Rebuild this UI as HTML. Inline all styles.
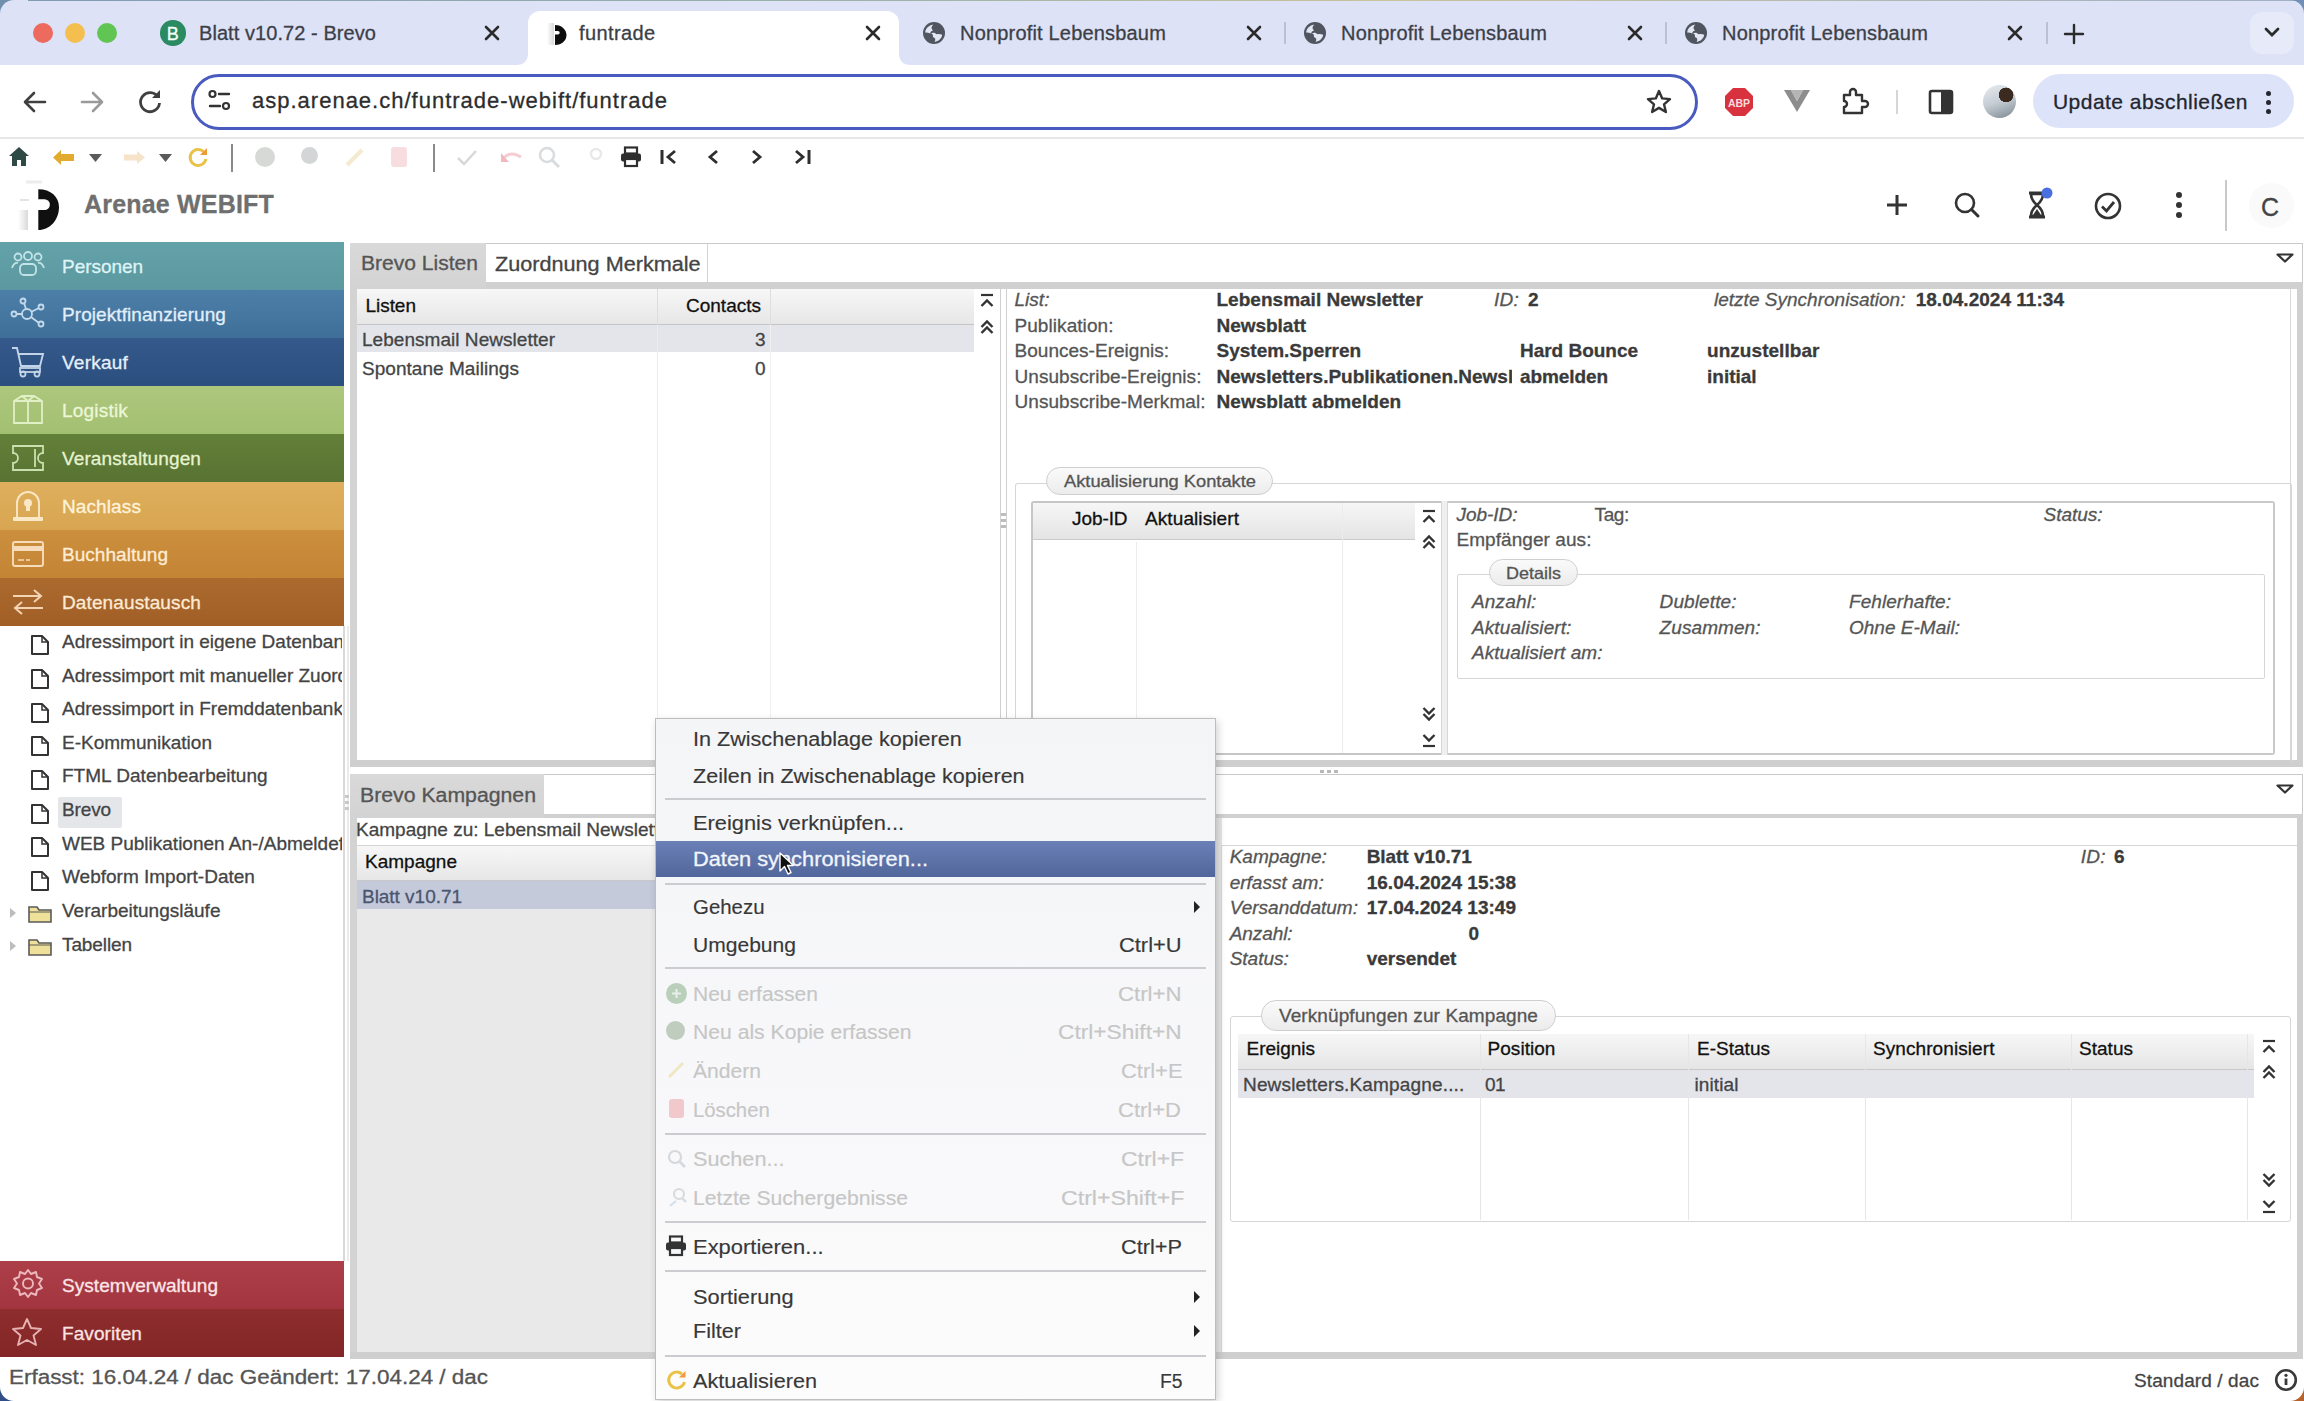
<!DOCTYPE html>
<html><head><meta charset="utf-8">
<style>
*{box-sizing:border-box;margin:0;padding:0}
html,body{width:2304px;height:1401px;overflow:hidden;background:#fff;font-family:"Liberation Sans",sans-serif}
body{position:relative}
.a{position:absolute}
.t{position:absolute;white-space:nowrap;line-height:1;-webkit-text-stroke:0.3px currentColor}
svg.a{overflow:visible}
</style></head>
<body>
<div class="a" style="left:0px;top:0px;width:2304px;height:65px;background:#dde2f7;"></div>
<div class="a" style="left:0px;top:0px;width:2304px;height:1px;background:linear-gradient(90deg,#7f9bb5,#9fb4a8 40%,#c9c39a 60%,#9fb0c8);"></div>
<div class="a" style="left:0;top:0;width:14px;height:14px;background:#6f8fae"></div><div class="a" style="left:0;top:0;width:28px;height:28px;border-top-left-radius:14px;background:#dde2f7"></div>
<div class="a" style="left:33px;top:23px;width:20px;height:20px;border-radius:50%;background:#ec6a5e"></div>
<div class="a" style="left:65px;top:23px;width:20px;height:20px;border-radius:50%;background:#f4bf4f"></div>
<div class="a" style="left:97px;top:23px;width:20px;height:20px;border-radius:50%;background:#61c554"></div>
<div class="a" style="left:160px;top:20px;width:25.5px;height:25.5px;border-radius:50%;background:#2a8a62"></div>
<span class="t" style="left:166.8px;top:25.26px;font-size:18px;color:#f4fff8">B</span>
<span class="t" style="left:199.0px;top:23.07px;font-size:20px;color:#3c3f47;letter-spacing:0.067px">Blatt v10.72 - Brevo</span>
<svg class="a" style="left:484px;top:25px;" width="16" height="16" viewBox="0 0 16 16"><path d="M2 2L14 14M14 2L2 14" stroke="#2b2b2b" stroke-width="2.6" stroke-linecap="round"/></svg>
<div class="a" style="left:528px;top:11px;width:371px;height:60px;background:#fff;border-radius:12px 12px 0 0"></div>
<svg class="a" style="left:516px;top:53px" width="12" height="12"><path d="M0 12 Q12 12 12 0 L12 12Z" fill="#fff"/></svg>
<svg class="a" style="left:899px;top:53px" width="12" height="12"><path d="M12 12 Q0 12 0 0 L0 12Z" fill="#fff"/></svg>
<svg class="a" style="left:546px;top:20px;" width="24" height="26" viewBox="0 0 24 26"><defs><linearGradient id="fg1" x1="0" x2="1"><stop offset="0" stop-color="#fff"/><stop offset="1" stop-color="#d8d8d8"/></linearGradient></defs><rect x="1" y="3" width="7" height="22" fill="url(#fg1)"/><path fill-rule="evenodd" d="M9 5 C16 5 20.5 10 20.5 15 C20.5 20.5 16 25 9 25 Z M9 11 H12 A1.7 1.7 0 0 1 12 14.4 H9 Z" fill="#0d0d0d"/></svg>
<span class="t" style="left:579.0px;top:23.07px;font-size:20px;color:#3c3f47;letter-spacing:0.389px">funtrade</span>
<svg class="a" style="left:865px;top:25px;" width="16" height="16" viewBox="0 0 16 16"><path d="M2 2L14 14M14 2L2 14" stroke="#2b2b2b" stroke-width="2.6" stroke-linecap="round"/></svg>
<svg class="a" style="left:922px;top:21px;" width="24" height="24" viewBox="0 0 24 24"><circle cx="12" cy="12" r="11" fill="#50555f"/><path d="M3.2 11.5 C3.6 7.5 6.5 4.6 11.3 3.6 C9.6 5.6 8.6 7.5 11 9.4 C9.2 10 8 10.8 8.4 12.4 C6.5 11.6 4.8 11.4 3.2 11.5Z" fill="#e3e6f3"/><path d="M9 12.3 C11.2 11.2 13.2 11.7 14.6 13.3 C16.4 12.8 18.3 13 20.2 13.8 C19.6 17.6 16.6 20.4 12.6 20.9 C14 18.8 13.4 16.8 10.8 16.1 C11.6 14.6 10.6 13 9 12.3Z" fill="#e3e6f3"/></svg>
<span class="t" style="left:960.0px;top:23.07px;font-size:20px;color:#3c3f47;letter-spacing:0.182px">Nonprofit Lebensbaum</span>
<svg class="a" style="left:1246px;top:25px;" width="16" height="16" viewBox="0 0 16 16"><path d="M2 2L14 14M14 2L2 14" stroke="#2b2b2b" stroke-width="2.6" stroke-linecap="round"/></svg>
<div class="a" style="left:1284px;top:22px;width:2px;height:22px;background:#b9c0d8;"></div>
<svg class="a" style="left:1303px;top:21px;" width="24" height="24" viewBox="0 0 24 24"><circle cx="12" cy="12" r="11" fill="#50555f"/><path d="M3.2 11.5 C3.6 7.5 6.5 4.6 11.3 3.6 C9.6 5.6 8.6 7.5 11 9.4 C9.2 10 8 10.8 8.4 12.4 C6.5 11.6 4.8 11.4 3.2 11.5Z" fill="#e3e6f3"/><path d="M9 12.3 C11.2 11.2 13.2 11.7 14.6 13.3 C16.4 12.8 18.3 13 20.2 13.8 C19.6 17.6 16.6 20.4 12.6 20.9 C14 18.8 13.4 16.8 10.8 16.1 C11.6 14.6 10.6 13 9 12.3Z" fill="#e3e6f3"/></svg>
<span class="t" style="left:1341.0px;top:23.07px;font-size:20px;color:#3c3f47;letter-spacing:0.182px">Nonprofit Lebensbaum</span>
<svg class="a" style="left:1627px;top:25px;" width="16" height="16" viewBox="0 0 16 16"><path d="M2 2L14 14M14 2L2 14" stroke="#2b2b2b" stroke-width="2.6" stroke-linecap="round"/></svg>
<div class="a" style="left:1665px;top:22px;width:2px;height:22px;background:#b9c0d8;"></div>
<svg class="a" style="left:1684px;top:21px;" width="24" height="24" viewBox="0 0 24 24"><circle cx="12" cy="12" r="11" fill="#50555f"/><path d="M3.2 11.5 C3.6 7.5 6.5 4.6 11.3 3.6 C9.6 5.6 8.6 7.5 11 9.4 C9.2 10 8 10.8 8.4 12.4 C6.5 11.6 4.8 11.4 3.2 11.5Z" fill="#e3e6f3"/><path d="M9 12.3 C11.2 11.2 13.2 11.7 14.6 13.3 C16.4 12.8 18.3 13 20.2 13.8 C19.6 17.6 16.6 20.4 12.6 20.9 C14 18.8 13.4 16.8 10.8 16.1 C11.6 14.6 10.6 13 9 12.3Z" fill="#e3e6f3"/></svg>
<span class="t" style="left:1722.0px;top:23.07px;font-size:20px;color:#3c3f47;letter-spacing:0.182px">Nonprofit Lebensbaum</span>
<svg class="a" style="left:2007px;top:25px;" width="16" height="16" viewBox="0 0 16 16"><path d="M2 2L14 14M14 2L2 14" stroke="#2b2b2b" stroke-width="2.6" stroke-linecap="round"/></svg>
<div class="a" style="left:2046px;top:22px;width:2px;height:22px;background:#b9c0d8;"></div>
<svg class="a" style="left:2063px;top:23px;" width="22" height="22" viewBox="0 0 22 22"><path d="M11 2V20M2 11H20" stroke="#2b2b2b" stroke-width="2.4" stroke-linecap="round"/></svg>
<div class="a" style="left:2250px;top:12px;width:44px;height:42px;border-radius:12px;background:#e6eaf9"></div>
<svg class="a" style="left:2290px;top:0" width="14" height="14"><path d="M14 0 L0 0 A14 14 0 0 1 14 14Z" fill="#6f8fb6"/></svg>
<svg class="a" style="left:2263px;top:26px;" width="18" height="12" viewBox="0 0 18 12"><path d="M3 3L9 9L15 3" stroke="#2b2b2b" stroke-width="2.8" fill="none" stroke-linecap="round"/></svg>
<div class="a" style="left:0px;top:65px;width:2304px;height:73px;background:#fff;"></div>
<div class="a" style="left:0px;top:137px;width:2304px;height:2px;background:#e6e6e6;"></div>
<svg class="a" style="left:22px;top:89px;" width="26" height="26" viewBox="0 0 26 26"><path d="M23 13H4M12 4L3 13L12 22" stroke="#3f3f3f" stroke-width="2.6" fill="none" stroke-linecap="round" stroke-linejoin="round"/></svg>
<svg class="a" style="left:79px;top:89px;" width="26" height="26" viewBox="0 0 26 26"><path d="M3 13H22M14 4L23 13L14 22" stroke="#9a9a9a" stroke-width="2.6" fill="none" stroke-linecap="round" stroke-linejoin="round"/></svg>
<svg class="a" style="left:137px;top:88px;" width="26" height="26" viewBox="0 0 26 26"><path d="M21 9 A9.5 9.5 0 1 0 22.5 15" stroke="#3f3f3f" stroke-width="2.8" fill="none"/><path d="M23 2V10H15Z" fill="#3f3f3f"/></svg>
<div class="a" style="left:191px;top:74px;width:1507px;height:56px;border:3px solid #4a5bbf;border-radius:28px;background:#fff"></div>
<svg class="a" style="left:207px;top:89px;" width="26" height="24" viewBox="0 0 26 24"><circle cx="5.5" cy="5" r="3" stroke="#333" stroke-width="2.2" fill="none"/><path d="M12 5H22M3 17H13" stroke="#333" stroke-width="2.4" stroke-linecap="round"/><circle cx="19" cy="17" r="3" stroke="#333" stroke-width="2.2" fill="none"/></svg>
<span class="t" style="left:252.0px;top:90.38px;font-size:22px;color:#2d2d2d;letter-spacing:1.002px">asp.arenae.ch/funtrade-webift/funtrade</span>
<svg class="a" style="left:1645px;top:88px;" width="28" height="28" viewBox="0 0 28 28"><path d="M14 3L17.2 10.4L25 11.1L19 16.3L20.9 24L14 19.9L7.1 24L9 16.3L3 11.1L10.8 10.4Z" stroke="#333" stroke-width="2.4" fill="none" stroke-linejoin="round"/></svg>
<svg class="a" style="left:1724px;top:87px;" width="30" height="30" viewBox="0 0 30 30"><path d="M9 1H21L29 9V21L21 29H9L1 21V9Z" fill="#d8323f"/><text x="15" y="19.5" font-family="Liberation Sans" font-weight="bold" font-size="10.5" fill="#fbdadd" text-anchor="middle">ABP</text></svg>
<svg class="a" style="left:1783px;top:88px;" width="28" height="26" viewBox="0 0 28 26"><path d="M1 2L14 24L27 2L20 2L14 13L8 2Z" fill="#8d8d8d"/><path d="M8 2L14 13L20 2" fill="#b5b5b5"/></svg>
<svg class="a" style="left:1840px;top:86px;" width="30" height="30" viewBox="0 0 30 30"><path d="M4 9H10V6A3 3 0 0 1 16 6V9H22V15H25A3 3 0 0 1 25 21H22V27H4V21A3 3 0 0 0 4 15Z" stroke="#333" stroke-width="2.4" fill="none" stroke-linejoin="round"/></svg>
<div class="a" style="left:1896px;top:90px;width:2px;height:24px;background:#d6d6d6;"></div>
<svg class="a" style="left:1928px;top:89px;" width="26" height="26" viewBox="0 0 26 26"><rect x="2" y="2" width="22" height="22" rx="2" stroke="#333" stroke-width="2.6" fill="none"/><rect x="13" y="2" width="11" height="22" fill="#333"/></svg>
<div class="a" style="left:1983px;top:85px;width:33px;height:33px;border-radius:50%;background:radial-gradient(circle at 70% 30%,#3a2a20 0 22%,transparent 23%),linear-gradient(160deg,#e8ecef 0%,#c5ccd3 50%,#7b8791 100%)"></div>
<div class="a" style="left:2033px;top:74px;width:261px;height:54px;border-radius:27px;background:#dde3f8"></div>
<span class="t" style="left:2053.0px;top:91.22px;font-size:21px;color:#23262e;letter-spacing:0.456px">Update abschließen</span>
<div class="a" style="left:2266px;top:91px;width:5px;height:5px;border-radius:50%;background:#23262e"></div>
<div class="a" style="left:2266px;top:100px;width:5px;height:5px;border-radius:50%;background:#23262e"></div>
<div class="a" style="left:2266px;top:109px;width:5px;height:5px;border-radius:50%;background:#23262e"></div>
<svg class="a" style="left:8px;top:146px;" width="22" height="21" viewBox="0 0 22 21"><path d="M11 1L1 10H4V20H9V14H13V20H18V10H21Z" fill="#2f4a44"/></svg>
<svg class="a" style="left:52px;top:149px;" width="24" height="17" viewBox="0 0 24 17"><path d="M1 8.5L9 1V5H22V12H9V16Z" fill="#e2ab2e"/></svg>
<svg class="a" style="left:89px;top:154px;" width="13" height="8" viewBox="0 0 13 8"><path d="M0 0H13L6.5 8Z" fill="#5a5a5a"/></svg>
<svg class="a" style="left:122px;top:150px;" width="24" height="15" viewBox="0 0 24 15"><path d="M23 7.5L15 1V4.5H2V10.5H15V14Z" fill="#f6e3c9"/></svg>
<svg class="a" style="left:159px;top:154px;" width="13" height="8" viewBox="0 0 13 8"><path d="M0 0H13L6.5 8Z" fill="#5a5a5a"/></svg>
<svg class="a" style="left:187px;top:146px;" width="22" height="22" viewBox="0 0 22 22"><path d="M17 6 A8 8 0 1 0 19 13" stroke="#e9c24a" stroke-width="3" fill="none"/><path d="M20 2V9H13Z" fill="#ef9b3a"/></svg>
<div class="a" style="left:231px;top:144px;width:2px;height:28px;background:#8a8a8a;"></div>
<div class="a" style="left:255px;top:147px;width:20px;height:20px;border-radius:50%;background:#d6d9d6"></div>
<div class="a" style="left:301px;top:147px;width:17px;height:17px;border-radius:50%;background:#d2d6d6"></div>
<svg class="a" style="left:344px;top:146px;" width="22" height="22" viewBox="0 0 22 22"><path d="M3 19L18 4" stroke="#f3ead0" stroke-width="4"/></svg>
<div class="a" style="left:391px;top:147px;width:16px;height:20px;border-radius:3px;background:#f8dde0"></div>
<div class="a" style="left:433px;top:144px;width:2px;height:28px;background:#8a8a8a;"></div>
<svg class="a" style="left:456px;top:148px;" width="22" height="18" viewBox="0 0 22 18"><path d="M2 10L8 16L20 3" stroke="#d8d8d8" stroke-width="2.5" fill="none"/></svg>
<svg class="a" style="left:500px;top:149px;" width="24" height="16" viewBox="0 0 24 16"><path d="M3 10 Q10 1 21 8" stroke="#f6cdd2" stroke-width="3" fill="none"/><path d="M1 4V13H9Z" fill="#f1b8c0"/></svg>
<svg class="a" style="left:538px;top:146px;" width="24" height="24" viewBox="0 0 24 24"><circle cx="9" cy="9" r="7" stroke="#d9dcdf" stroke-width="2.5" fill="none"/><path d="M14 14L21 21" stroke="#d9dcdf" stroke-width="3"/></svg>
<svg class="a" style="left:587px;top:146px;" width="20" height="20" viewBox="0 0 20 20"><circle cx="9" cy="8" r="5" stroke="#e8e8ea" stroke-width="2.5" fill="none"/></svg>
<svg class="a" style="left:620px;top:146px;" width="22" height="22" viewBox="0 0 22 22"><rect x="5" y="1.5" width="12" height="6" stroke="#2e2e2e" stroke-width="2.2" fill="none"/><rect x="1" y="7.5" width="20" height="8" rx="2" fill="#2e2e2e"/><rect x="5" y="13" width="12" height="7" stroke="#2e2e2e" stroke-width="2.2" fill="#fff"/></svg>
<svg class="a" style="left:660px;top:149px;" width="20" height="16" viewBox="0 0 20 16"><path d="M2 1V15" stroke="#2e2e2e" stroke-width="3"/><path d="M15 2L8 8L15 14" stroke="#2e2e2e" stroke-width="2.8" fill="none"/></svg>
<svg class="a" style="left:705px;top:149px;" width="16" height="16" viewBox="0 0 16 16"><path d="M12 2L5 8L12 14" stroke="#2e2e2e" stroke-width="2.8" fill="none"/></svg>
<svg class="a" style="left:749px;top:149px;" width="16" height="16" viewBox="0 0 16 16"><path d="M4 2L11 8L4 14" stroke="#2e2e2e" stroke-width="2.8" fill="none"/></svg>
<svg class="a" style="left:793px;top:149px;" width="20" height="16" viewBox="0 0 20 16"><path d="M3 2L10 8L3 14" stroke="#2e2e2e" stroke-width="2.8" fill="none"/><path d="M16 1V15" stroke="#2e2e2e" stroke-width="3"/></svg>
<svg class="a" style="left:14px;top:180px;" width="48" height="52" viewBox="0 0 48 52"><defs><linearGradient id="lg1" x1="0" x2="1"><stop offset="0" stop-color="#fff"/><stop offset="1" stop-color="#dcd8dc"/></linearGradient></defs><rect x="4" y="30" width="10" height="20" fill="url(#lg1)"/><rect x="12" y="0.5" width="16" height="3" fill="#ececec"/><rect x="6" y="19" width="9" height="2" fill="#e4e4e4"/><path fill-rule="evenodd" d="M24.3 9.3 C37 9.3 45 17 45 27 C45 40 36 50 24.3 50 Z M24.3 19.2 H30.5 A5.4 5.4 0 0 1 30.5 30 H24.3 Z" fill="#101010"/></svg>
<span class="t" style="left:84.0px;top:191.84px;font-size:25px;color:#6f6f6f;font-weight:bold;letter-spacing:0.190px">Arenae WEBIFT</span>
<svg class="a" style="left:1885px;top:193px;" width="24" height="24" viewBox="0 0 24 24"><path d="M12 2V22M2 12H22" stroke="#333" stroke-width="3"/></svg>
<svg class="a" style="left:1953px;top:191px;" width="28" height="28" viewBox="0 0 28 28"><circle cx="12" cy="12" r="9" stroke="#333" stroke-width="2.6" fill="none"/><path d="M18.5 18.5L25 25" stroke="#333" stroke-width="3" stroke-linecap="round"/></svg>
<svg class="a" style="left:2025px;top:188px;" width="28" height="32" viewBox="0 0 28 32"><path d="M4 5H20M4 29H20" stroke="#333" stroke-width="3"/><path d="M6 6 L18 6 Q18 12 12 17 Q6 12 6 6Z M6 28 L18 28 Q18 22 12 17 Q6 22 6 28Z" stroke="#333" stroke-width="2.6" fill="none"/><path d="M8 27L12 21L16 27Z" fill="#333"/><circle cx="22" cy="5" r="5.5" fill="#4a6fe0"/></svg>
<svg class="a" style="left:2093px;top:191px;" width="30" height="30" viewBox="0 0 30 30"><circle cx="15" cy="15" r="12" stroke="#333" stroke-width="2.6" fill="none"/><path d="M9 15.5L13.5 20L21 11" stroke="#333" stroke-width="2.8" fill="none"/></svg>
<div class="a" style="left:2176px;top:192px;width:6px;height:6px;border-radius:50%;background:#333"></div>
<div class="a" style="left:2176px;top:202px;width:6px;height:6px;border-radius:50%;background:#333"></div>
<div class="a" style="left:2176px;top:212px;width:6px;height:6px;border-radius:50%;background:#333"></div>
<div class="a" style="left:2225px;top:180px;width:2px;height:51px;background:#c9c9c9;"></div>
<div class="a" style="left:2249px;top:183px;width:45px;height:45px;border-radius:50%;background:#fafafa"></div>
<span class="t" style="left:2261.0px;top:194.84px;font-size:25px;color:#444">C</span>
<div class="a" style="left:0px;top:242px;width:344px;height:48px;background:linear-gradient(180deg,#64a2a9,#5b98a0);"></div>
<span class="t" style="left:62.0px;top:256.92px;font-size:19px;color:#def4f6;letter-spacing:-0.043px">Personen</span>
<div class="a" style="left:0px;top:290px;width:344px;height:48px;background:linear-gradient(180deg,#4c7fa8,#3f6f98);"></div>
<span class="t" style="left:62.0px;top:304.92px;font-size:19px;color:#e1effb;letter-spacing:0.071px">Projektfinanzierung</span>
<div class="a" style="left:0px;top:338px;width:344px;height:48px;background:linear-gradient(180deg,#34598a,#2b4f7f);"></div>
<span class="t" style="left:62.0px;top:352.92px;font-size:19px;color:#e6f0fb;letter-spacing:0.223px">Verkauf</span>
<div class="a" style="left:0px;top:386px;width:344px;height:48px;background:linear-gradient(180deg,#adc77d,#a3c071);"></div>
<span class="t" style="left:62.0px;top:400.92px;font-size:19px;color:#ecf7d9;letter-spacing:0.197px">Logistik</span>
<div class="a" style="left:0px;top:434px;width:344px;height:48px;background:linear-gradient(180deg,#638039,#587332);"></div>
<span class="t" style="left:62.0px;top:448.92px;font-size:19px;color:#e7f3d0;letter-spacing:0.110px">Veranstaltungen</span>
<div class="a" style="left:0px;top:482px;width:344px;height:48px;background:linear-gradient(180deg,#dfaf5d,#d8a652);"></div>
<span class="t" style="left:62.0px;top:496.92px;font-size:19px;color:#fff3db;letter-spacing:0.105px">Nachlass</span>
<div class="a" style="left:0px;top:530px;width:344px;height:48px;background:linear-gradient(180deg,#cb8f3e,#c48535);"></div>
<span class="t" style="left:62.0px;top:544.92px;font-size:19px;color:#fdecd6;letter-spacing:0.031px">Buchhaltung</span>
<div class="a" style="left:0px;top:578px;width:344px;height:48px;background:linear-gradient(180deg,#ab6a2e,#a15f27);"></div>
<span class="t" style="left:62.0px;top:592.92px;font-size:19px;color:#fcead6;letter-spacing:0.119px">Datenaustausch</span>
<div class="a" style="left:0px;top:1261px;width:344px;height:48px;background:linear-gradient(180deg,#ad3f49,#a2353f);"></div>
<span class="t" style="left:62.0px;top:1275.92px;font-size:19px;color:#fde6e8;letter-spacing:0.048px">Systemverwaltung</span>
<div class="a" style="left:0px;top:1309px;width:344px;height:48px;background:linear-gradient(180deg,#8e2d2e,#832526);"></div>
<span class="t" style="left:62.0px;top:1323.92px;font-size:19px;color:#fbe3e3;letter-spacing:0.089px">Favoriten</span>
<svg class="a" style="left:10px;top:249px;opacity:0.88" width="36" height="34" viewBox="0 0 36 34"><circle cx="8" cy="8" r="3.5" stroke="#cfeef2" stroke-width="1.8" fill="none"/><circle cx="18" cy="7" r="4" stroke="#cfeef2" stroke-width="1.8" fill="none"/><circle cx="28" cy="8" r="3.5" stroke="#cfeef2" stroke-width="1.8" fill="none"/><path d="M2 19 Q4 13 8 14 M34 19 Q32 13 28 14" stroke="#cfeef2" stroke-width="1.8" fill="none"/><rect x="10" y="15" width="16" height="11" rx="4" stroke="#cfeef2" stroke-width="1.8" fill="none"/></svg>
<svg class="a" style="left:10px;top:297px;opacity:0.88" width="36" height="34" viewBox="0 0 36 34"><circle cx="17" cy="17" r="5" stroke="#d5e7f7" stroke-width="1.8" fill="none"/><circle cx="4" cy="17" r="2.5" stroke="#d5e7f7" stroke-width="1.8" fill="none"/><circle cx="13" cy="4" r="2.5" stroke="#d5e7f7" stroke-width="1.8" fill="none"/><circle cx="31" cy="10" r="2.5" stroke="#d5e7f7" stroke-width="1.8" fill="none"/><circle cx="31" cy="27" r="2.5" stroke="#d5e7f7" stroke-width="1.8" fill="none"/><path d="M7 17H12M14 6L16 12M29 11L21 15M29 26L21 20" stroke="#d5e7f7" stroke-width="1.8"/></svg>
<svg class="a" style="left:10px;top:345px;opacity:0.88" width="36" height="34" viewBox="0 0 36 34"><path d="M2 3H7L11 21H30L33 9H9" stroke="#d8e6f7" stroke-width="1.9" fill="none"/><rect x="10" y="23" width="20" height="4" stroke="#d8e6f7" stroke-width="1.8" fill="none"/><circle cx="13" cy="29" r="2.5" stroke="#d8e6f7" stroke-width="1.8" fill="none"/><circle cx="27" cy="29" r="2.5" stroke="#d8e6f7" stroke-width="1.8" fill="none"/></svg>
<svg class="a" style="left:10px;top:393px;opacity:0.88" width="36" height="34" viewBox="0 0 36 34"><path d="M4 8L12 3H24L32 8V30H4Z M4 8H32 M18 8V30 M12 3L18 8L24 3" stroke="#e8f6d2" stroke-width="1.8" fill="none"/></svg>
<svg class="a" style="left:10px;top:441px;opacity:0.88" width="36" height="34" viewBox="0 0 36 34"><path d="M3 5H33V12 A5 5 0 0 0 33 22V29H3V22 A5 5 0 0 0 3 12Z M25 8V26" stroke="#d9eec0" stroke-width="1.8" fill="none"/></svg>
<svg class="a" style="left:10px;top:489px;opacity:0.88" width="36" height="34" viewBox="0 0 36 34"><path d="M7 28V14 A11 11 0 0 1 29 14V28" stroke="#fff0d5" stroke-width="1.9" fill="none"/><rect x="3" y="28" width="30" height="4" rx="1" fill="#fff0d5"/><circle cx="18" cy="14" r="4" fill="#fff0d5"/><path d="M16 16H20V22H16Z" fill="#fff0d5"/></svg>
<svg class="a" style="left:10px;top:537px;opacity:0.88" width="36" height="34" viewBox="0 0 36 34"><rect x="3" y="5" width="30" height="24" rx="2" stroke="#fde8cc" stroke-width="1.9" fill="none"/><rect x="3" y="9" width="30" height="5" fill="#fde8cc"/><path d="M8 23H14M16 23H20" stroke="#fde8cc" stroke-width="1.5"/></svg>
<svg class="a" style="left:10px;top:585px;opacity:0.88" width="36" height="34" viewBox="0 0 36 34"><path d="M3 11H30 M24 5L31 11L24 17 M33 23H6 M12 17L5 23L12 29" stroke="#fde4c8" stroke-width="2" fill="none"/></svg>
<svg class="a" style="left:10px;top:1268px;opacity:0.88" width="36" height="34" viewBox="0 0 36 34"><path d="M18 2L21 6L26 4L27 9L32 11L29 15.5L32 20L27 22L26 27L21 25L18 29L15 25L10 27L9 22L4 20L7 15.5L4 11L9 9L10 4L15 6Z" stroke="#f6c9ce" stroke-width="1.9" fill="none" stroke-linejoin="round"/><circle cx="18" cy="15.5" r="5" stroke="#f6c9ce" stroke-width="1.9" fill="none"/></svg>
<svg class="a" style="left:10px;top:1316px;opacity:0.88" width="36" height="34" viewBox="0 0 36 34"><path d="M17 3L21 12L31 13L23.5 19.5L26 29L17 24L8 29L10.5 19.5L3 13L13 12Z" stroke="#f3c4c4" stroke-width="1.9" fill="none" stroke-linejoin="round"/></svg>
<div class="a" style="left:343px;top:626px;width:2px;height:635px;background:#d9d9d9;"></div>
<div class="a" style="left:347px;top:626px;width:2px;height:635px;background:#ebebeb;"></div>
<div class="a" style="left:58px;top:797px;width:64px;height:31px;background:#e4e6ea;border-radius:2px"></div>
<span class="t" style="left:62.0px;top:631.92px;font-size:19px;color:#444;width:280px;overflow:hidden">Adressimport in eigene Datenbank</span>
<svg class="a" style="left:29px;top:634px;" width="22" height="22" viewBox="0 0 22 22"><path d="M3 2H13L19 8V20H3Z" stroke="#333" stroke-width="2" fill="#fff" stroke-linejoin="round"/><path d="M13 2V8H19" stroke="#333" stroke-width="1.5" fill="none"/></svg>
<span class="t" style="left:62.0px;top:665.62px;font-size:19px;color:#444;width:280px;overflow:hidden">Adressimport mit manueller Zuordnung</span>
<svg class="a" style="left:29px;top:667.7px;" width="22" height="22" viewBox="0 0 22 22"><path d="M3 2H13L19 8V20H3Z" stroke="#333" stroke-width="2" fill="#fff" stroke-linejoin="round"/><path d="M13 2V8H19" stroke="#333" stroke-width="1.5" fill="none"/></svg>
<span class="t" style="left:62.0px;top:699.42px;font-size:19px;color:#444;width:280px;overflow:hidden">Adressimport in Fremddatenbank</span>
<svg class="a" style="left:29px;top:701.5px;" width="22" height="22" viewBox="0 0 22 22"><path d="M3 2H13L19 8V20H3Z" stroke="#333" stroke-width="2" fill="#fff" stroke-linejoin="round"/><path d="M13 2V8H19" stroke="#333" stroke-width="1.5" fill="none"/></svg>
<span class="t" style="left:62.0px;top:732.92px;font-size:19px;color:#444">E-Kommunikation</span>
<svg class="a" style="left:29px;top:735px;" width="22" height="22" viewBox="0 0 22 22"><path d="M3 2H13L19 8V20H3Z" stroke="#333" stroke-width="2" fill="#fff" stroke-linejoin="round"/><path d="M13 2V8H19" stroke="#333" stroke-width="1.5" fill="none"/></svg>
<span class="t" style="left:62.0px;top:766.42px;font-size:19px;color:#444;letter-spacing:0.017px">FTML Datenbearbeitung</span>
<svg class="a" style="left:29px;top:768.5px;" width="22" height="22" viewBox="0 0 22 22"><path d="M3 2H13L19 8V20H3Z" stroke="#333" stroke-width="2" fill="#fff" stroke-linejoin="round"/><path d="M13 2V8H19" stroke="#333" stroke-width="1.5" fill="none"/></svg>
<span class="t" style="left:62.0px;top:800.42px;font-size:19px;color:#444;letter-spacing:-0.128px">Brevo</span>
<svg class="a" style="left:29px;top:802.5px;" width="22" height="22" viewBox="0 0 22 22"><path d="M3 2H13L19 8V20H3Z" stroke="#333" stroke-width="2" fill="#fff" stroke-linejoin="round"/><path d="M13 2V8H19" stroke="#333" stroke-width="1.5" fill="none"/></svg>
<span class="t" style="left:62.0px;top:833.92px;font-size:19px;color:#444;width:280px;overflow:hidden">WEB Publikationen An-/Abmeldeformular</span>
<svg class="a" style="left:29px;top:836px;" width="22" height="22" viewBox="0 0 22 22"><path d="M3 2H13L19 8V20H3Z" stroke="#333" stroke-width="2" fill="#fff" stroke-linejoin="round"/><path d="M13 2V8H19" stroke="#333" stroke-width="1.5" fill="none"/></svg>
<span class="t" style="left:62.0px;top:867.42px;font-size:19px;color:#444">Webform Import-Daten</span>
<svg class="a" style="left:29px;top:869.5px;" width="22" height="22" viewBox="0 0 22 22"><path d="M3 2H13L19 8V20H3Z" stroke="#333" stroke-width="2" fill="#fff" stroke-linejoin="round"/><path d="M13 2V8H19" stroke="#333" stroke-width="1.5" fill="none"/></svg>
<span class="t" style="left:62.0px;top:901.42px;font-size:19px;color:#444">Verarbeitungsläufe</span>
<svg class="a" style="left:27px;top:903.5px;" width="26" height="20" viewBox="0 0 26 20"><path d="M2 3H10L12 6H24V18H2Z" fill="#efe09a" stroke="#5a5a5a" stroke-width="1.6"/><path d="M2 8H24" stroke="#5a5a5a" stroke-width="1"/></svg>
<svg class="a" style="left:9px;top:907.5px;" width="8" height="10" viewBox="0 0 8 10"><path d="M1 0L7 5L1 10Z" fill="#bdbdbd"/></svg>
<span class="t" style="left:62.0px;top:934.92px;font-size:19px;color:#444;letter-spacing:-0.098px">Tabellen</span>
<svg class="a" style="left:27px;top:937px;" width="26" height="20" viewBox="0 0 26 20"><path d="M2 3H10L12 6H24V18H2Z" fill="#efe09a" stroke="#5a5a5a" stroke-width="1.6"/><path d="M2 8H24" stroke="#5a5a5a" stroke-width="1"/></svg>
<svg class="a" style="left:9px;top:941px;" width="8" height="10" viewBox="0 0 8 10"><path d="M1 0L7 5L1 10Z" fill="#bdbdbd"/></svg>
<div class="a" style="left:350px;top:243px;width:1953px;height:524px;background:#fff;border-top:1px solid #c9c9c9;border-right:1px solid #c9c9c9"></div>
<div class="a" style="left:350px;top:282px;width:1953px;height:7px;background:#d0d0d0;"></div>
<div class="a" style="left:350px;top:243px;width:136px;height:46px;background:linear-gradient(#d9d9d9,#d3d3d3);"></div>
<span class="t" style="left:361.0px;top:254.49px;font-size:19.5px;color:#555;transform:scaleX(1.0793);transform-origin:0 0">Brevo Listen</span>
<div class="a" style="left:486px;top:244px;width:222px;height:38px;background:#fff;border-right:1px solid #d4d4d4"></div>
<span class="t" style="left:495.0px;top:255.49px;font-size:19.5px;color:#444;transform:scaleX(1.1093);transform-origin:0 0">Zuordnung Merkmale</span>
<svg class="a" style="left:2276px;top:253px;" width="18" height="10" viewBox="0 0 18 10"><path d="M1.5 1.5H16.5L9 8.5Z" stroke="#333" stroke-width="2.2" fill="#fff" stroke-linejoin="round"/></svg>
<div class="a" style="left:350px;top:289px;width:7px;height:478px;background:#d3d3d3;"></div>
<div class="a" style="left:350px;top:760px;width:1953px;height:7px;background:#cfcfcf;"></div>
<div class="a" style="left:357px;top:289px;width:617px;height:36px;background:linear-gradient(#f7f7f7,#e6e6e6);"></div>
<div class="a" style="left:357px;top:324px;width:617px;height:1px;background:#c4c4c4;"></div>
<div class="a" style="left:657px;top:289px;width:1px;height:36px;background:#dedede;"></div>
<div class="a" style="left:770px;top:289px;width:1px;height:36px;background:#dedede;"></div>
<span class="t" style="left:365.5px;top:295.92px;font-size:19px;color:#111;letter-spacing:-0.051px">Listen</span>
<span class="t" style="left:686.0px;top:295.92px;font-size:19px;color:#111">Contacts</span>
<div class="a" style="left:357px;top:325px;width:617px;height:27px;background:#e3e5eb;"></div>
<span class="t" style="left:362.0px;top:329.92px;font-size:19px;color:#444;letter-spacing:0.038px">Lebensmail Newsletter</span>
<span class="t" style="left:755.0px;top:329.92px;font-size:19px;color:#444">3</span>
<span class="t" style="left:362.0px;top:358.92px;font-size:19px;color:#444;letter-spacing:0.040px">Spontane Mailings</span>
<span class="t" style="left:755.0px;top:358.92px;font-size:19px;color:#444">0</span>
<div class="a" style="left:657px;top:325px;width:1px;height:435px;background:#ececec;"></div>
<div class="a" style="left:770px;top:325px;width:1px;height:435px;background:#f0f0f0;"></div>
<svg class="a" style="left:979px;top:293px;" width="16" height="16" viewBox="0 0 16 16"><path d="M2 2H14" stroke="#333" stroke-width="2.2"/><path d="M2.5 13L8 7.5L13.5 13" stroke="#333" stroke-width="2.4" fill="none"/></svg>
<svg class="a" style="left:979px;top:319px;" width="16" height="16" viewBox="0 0 16 16"><path d="M2.5 8L8 2.5L13.5 8M2.5 14L8 8.5L13.5 14" stroke="#333" stroke-width="2.4" fill="none"/></svg>
<div class="a" style="left:1000px;top:289px;width:1px;height:471px;background:#d0d0d0;"></div>
<div class="a" style="left:1006px;top:289px;width:1px;height:471px;background:#cfcfcf;"></div>
<div class="a" style="left:1001px;top:513px;width:5px;height:3px;background:#bdbdbd;"></div>
<div class="a" style="left:1001px;top:519px;width:5px;height:3px;background:#bdbdbd;"></div>
<div class="a" style="left:1001px;top:525px;width:5px;height:3px;background:#bdbdbd;"></div>
<div class="a" style="left:2290px;top:289px;width:1px;height:471px;background:#d8d8d8;"></div>
<div class="a" style="left:2297px;top:289px;width:6px;height:478px;background:#d0d0d0;"></div>
<span class="t" style="left:1014.5px;top:290.42px;font-size:19px;color:#555;font-style:italic;letter-spacing:0.028px">List:</span>
<span class="t" style="left:1216.5px;top:290.42px;font-size:19px;color:#3a3a3a;font-weight:bold;letter-spacing:0.018px">Lebensmail Newsletter</span>
<span class="t" style="left:1494.0px;top:290.42px;font-size:19px;color:#555;font-style:italic;letter-spacing:0.240px">ID:</span>
<span class="t" style="left:1528.0px;top:290.42px;font-size:19px;color:#3a3a3a;font-weight:bold">2</span>
<span class="t" style="left:1714.0px;top:290.42px;font-size:19px;color:#555;font-style:italic;letter-spacing:0.014px">letzte Synchronisation:</span>
<span class="t" style="left:1915.7px;top:290.42px;font-size:19px;color:#3a3a3a;font-weight:bold;letter-spacing:0.024px">18.04.2024 11:34</span>
<span class="t" style="left:1014.5px;top:315.92px;font-size:19px;color:#555;letter-spacing:0.064px">Publikation:</span>
<span class="t" style="left:1216.5px;top:315.92px;font-size:19px;color:#3a3a3a;font-weight:bold;letter-spacing:-0.028px">Newsblatt</span>
<span class="t" style="left:1014.5px;top:341.42px;font-size:19px;color:#555;letter-spacing:0.023px">Bounces-Ereignis:</span>
<span class="t" style="left:1216.5px;top:341.42px;font-size:19px;color:#3a3a3a;font-weight:bold">System.Sperren</span>
<span class="t" style="left:1014.5px;top:366.92px;font-size:19px;color:#555;letter-spacing:0.054px">Unsubscribe-Ereignis:</span>
<span class="t" style="left:1014.5px;top:392.42px;font-size:19px;color:#555;letter-spacing:0.048px">Unsubscribe-Merkmal:</span>
<span class="t" style="left:1216.5px;top:392.42px;font-size:19px;color:#3a3a3a;font-weight:bold;letter-spacing:0.055px">Newsblatt abmelden</span>
<span class="t" style="left:1216.5px;top:366.92px;font-size:19px;color:#3a3a3a;font-weight:bold;width:295px;overflow:hidden">Newsletters.Publikationen.Newsletter</span>
<span class="t" style="left:1520.0px;top:341.42px;font-size:19px;color:#3a3a3a;font-weight:bold;letter-spacing:-0.023px">Hard Bounce</span>
<span class="t" style="left:1707.0px;top:341.42px;font-size:19px;color:#3a3a3a;font-weight:bold;letter-spacing:0.049px">unzustellbar</span>
<span class="t" style="left:1520.0px;top:366.92px;font-size:19px;color:#3a3a3a;font-weight:bold;letter-spacing:-0.088px">abmelden</span>
<span class="t" style="left:1707.0px;top:366.92px;font-size:19px;color:#3a3a3a;font-weight:bold">initial</span>
<div class="a" style="left:1015px;top:483px;width:1277px;height:280px;border:1px solid #d6d6d6;border-bottom:none;border-radius:3px 3px 0 0"></div>
<div class="a" style="left:1046px;top:467px;width:227px;height:28px;border:1px solid #cfcfcf;border-radius:14px;background:linear-gradient(#fafafa,#ececec)"></div>
<span class="t" style="left:1064.0px;top:473.96px;font-size:16px;color:#555;transform:scaleX(1.1421);transform-origin:0 0">Aktualisierung Kontakte</span>
<div class="a" style="left:1031px;top:501px;width:412px;height:254px;border:2px solid #c6c6c6;border-right:none;border-radius:3px 0 0 0;background:#fff"></div>
<div class="a" style="left:1033px;top:503px;width:382px;height:36px;background:linear-gradient(#f6f6f6,#e4e4e4);"></div>
<div class="a" style="left:1033px;top:539px;width:382px;height:1px;background:#cacaca;"></div>
<span class="t" style="left:1072.0px;top:509.42px;font-size:19px;color:#111;letter-spacing:-0.078px">Job-ID</span>
<span class="t" style="left:1145.0px;top:509.42px;font-size:19px;color:#111;letter-spacing:0.090px">Aktualisiert</span>
<div class="a" style="left:1136px;top:542px;width:1px;height:211px;background:#ececec;"></div>
<div class="a" style="left:1342px;top:503px;width:1px;height:250px;background:#ececec;"></div>
<svg class="a" style="left:1420.5px;top:508.5px;" width="16" height="16" viewBox="0 0 16 16"><path d="M2 2H14" stroke="#333" stroke-width="2.2"/><path d="M2.5 13L8 7.5L13.5 13" stroke="#333" stroke-width="2.4" fill="none"/></svg>
<svg class="a" style="left:1420.5px;top:534px;" width="16" height="16" viewBox="0 0 16 16"><path d="M2.5 8L8 2.5L13.5 8M2.5 14L8 8.5L13.5 14" stroke="#333" stroke-width="2.4" fill="none"/></svg>
<svg class="a" style="left:1420.5px;top:706px;" width="16" height="16" viewBox="0 0 16 16"><path d="M2.5 2L8 7.5L13.5 2M2.5 8L8 13.5L13.5 8" stroke="#333" stroke-width="2.4" fill="none"/></svg>
<svg class="a" style="left:1420.5px;top:731.5px;" width="16" height="16" viewBox="0 0 16 16"><path d="M2.5 3L8 8.5L13.5 3" stroke="#333" stroke-width="2.4" fill="none"/><path d="M2 14H14" stroke="#333" stroke-width="2.2"/></svg>
<div class="a" style="left:1441px;top:501px;width:7px;height:254px;background:#efefef;"></div>
<div class="a" style="left:1441px;top:501px;width:1px;height:254px;background:#d6d6d6;"></div>
<div class="a" style="left:1447px;top:501px;width:1px;height:254px;background:#d6d6d6;"></div>
<div class="a" style="left:1448px;top:501px;width:827px;height:254px;border:2px solid #c9c9c9;border-left:none;border-radius:0 3px 3px 0"></div>
<span class="t" style="left:1456.5px;top:504.72px;font-size:19px;color:#555;font-style:italic;letter-spacing:-0.036px">Job-ID:</span>
<span class="t" style="left:1594.5px;top:504.72px;font-size:19px;color:#555;letter-spacing:-0.355px">Tag:</span>
<span class="t" style="left:2043.5px;top:504.72px;font-size:19px;color:#555;font-style:italic;letter-spacing:-0.022px">Status:</span>
<span class="t" style="left:1456.5px;top:530.12px;font-size:19px;color:#555;letter-spacing:0.061px">Empfänger aus:</span>
<div class="a" style="left:1457px;top:574px;width:808px;height:105px;border:1px solid #d6d6d6;border-radius:2px"></div>
<div class="a" style="left:1489px;top:559px;width:89px;height:27px;border:1px solid #cfcfcf;border-radius:14px;background:linear-gradient(#fafafa,#ececec)"></div>
<span class="t" style="left:1506.0px;top:564.53px;font-size:16.5px;color:#555;transform:scaleX(1.0905);transform-origin:0 0">Details</span>
<span class="t" style="left:1472.0px;top:592.12px;font-size:19px;color:#555;font-style:italic;letter-spacing:0.161px">Anzahl:</span>
<span class="t" style="left:1472.0px;top:617.72px;font-size:19px;color:#555;font-style:italic;letter-spacing:0.100px">Aktualisiert:</span>
<span class="t" style="left:1472.0px;top:642.92px;font-size:19px;color:#555;font-style:italic;letter-spacing:0.039px">Aktualisiert am:</span>
<span class="t" style="left:1659.6px;top:592.12px;font-size:19px;color:#555;font-style:italic;letter-spacing:0.106px">Dublette:</span>
<span class="t" style="left:1659.6px;top:617.92px;font-size:19px;color:#555;font-style:italic;letter-spacing:0.076px">Zusammen:</span>
<span class="t" style="left:1849.0px;top:592.12px;font-size:19px;color:#555;font-style:italic;letter-spacing:0.049px">Fehlerhafte:</span>
<span class="t" style="left:1849.0px;top:617.92px;font-size:19px;color:#555;font-style:italic;letter-spacing:0.010px">Ohne E-Mail:</span>
<div class="a" style="left:1320px;top:770px;width:4px;height:3px;background:#b8b8b8;"></div>
<div class="a" style="left:1327px;top:770px;width:4px;height:3px;background:#b8b8b8;"></div>
<div class="a" style="left:1334px;top:770px;width:4px;height:3px;background:#b8b8b8;"></div>
<div class="a" style="left:350px;top:774px;width:1953px;height:585px;background:#fff;border-top:1px solid #c9c9c9;border-right:1px solid #c9c9c9"></div>
<div class="a" style="left:350px;top:814px;width:1953px;height:4px;background:#d0d0d0;"></div>
<div class="a" style="left:350px;top:774px;width:194px;height:44px;background:linear-gradient(#d9d9d9,#d3d3d3);"></div>
<span class="t" style="left:360.0px;top:786.49px;font-size:19.5px;color:#555;transform:scaleX(1.0896);transform-origin:0 0">Brevo Kampagnen</span>
<svg class="a" style="left:2276px;top:784px;" width="18" height="10" viewBox="0 0 18 10"><path d="M1.5 1.5H16.5L9 8.5Z" stroke="#333" stroke-width="2.2" fill="#fff" stroke-linejoin="round"/></svg>
<div class="a" style="left:350px;top:818px;width:7px;height:541px;background:#d3d3d3;"></div>
<div class="a" style="left:350px;top:1352px;width:1953px;height:7px;background:#cfcfcf;"></div>
<span class="t" style="left:356.0px;top:819.92px;font-size:19px;color:#444;width:300px;overflow:hidden">Kampagne zu: Lebensmail Newsletter</span>
<div class="a" style="left:357px;top:845px;width:298px;height:1px;background:#d6d6d6;"></div>
<div class="a" style="left:357px;top:846px;width:298px;height:35px;background:linear-gradient(#f7f7f7,#e6e6e6);"></div>
<div class="a" style="left:357px;top:880px;width:298px;height:1px;background:#c8c8c8;"></div>
<span class="t" style="left:365.0px;top:852.42px;font-size:19px;color:#111;letter-spacing:0.012px">Kampagne</span>
<div class="a" style="left:357px;top:881px;width:298px;height:28px;background:#c5cadb;"></div>
<span class="t" style="left:362.0px;top:886.92px;font-size:19px;color:#4a5570;letter-spacing:-0.029px">Blatt v10.71</span>
<div class="a" style="left:357px;top:909px;width:298px;height:443px;background:#e9e9e9;"></div>
<div class="a" style="left:1215px;top:818px;width:7px;height:534px;background:#e6e6e6;"></div>
<div class="a" style="left:2297px;top:817px;width:6px;height:542px;background:#d0d0d0;"></div>
<div class="a" style="left:1221px;top:845px;width:1076px;height:507px;border:1px solid #d6d6d6;border-bottom:none;border-right:none"></div>
<span class="t" style="left:1229.7px;top:846.92px;font-size:19px;color:#555;font-style:italic;letter-spacing:-0.021px">Kampagne:</span>
<span class="t" style="left:1366.7px;top:846.92px;font-size:19px;color:#3a3a3a;font-weight:bold;letter-spacing:-0.052px">Blatt v10.71</span>
<span class="t" style="left:2080.7px;top:846.92px;font-size:19px;color:#555;font-style:italic;letter-spacing:0.240px">ID:</span>
<span class="t" style="left:2114.0px;top:846.92px;font-size:19px;color:#3a3a3a;font-weight:bold">6</span>
<span class="t" style="left:1229.7px;top:872.52px;font-size:19px;color:#555;font-style:italic">erfasst am:</span>
<span class="t" style="left:1366.7px;top:872.52px;font-size:19px;color:#3a3a3a;font-weight:bold;letter-spacing:0.021px">16.04.2024 15:38</span>
<span class="t" style="left:1229.7px;top:898.12px;font-size:19px;color:#555;font-style:italic;letter-spacing:0.011px">Versanddatum:</span>
<span class="t" style="left:1366.7px;top:898.12px;font-size:19px;color:#3a3a3a;font-weight:bold;letter-spacing:0.021px">17.04.2024 13:49</span>
<span class="t" style="left:1229.7px;top:923.72px;font-size:19px;color:#555;font-style:italic;letter-spacing:-0.082px">Anzahl:</span>
<span class="t" style="left:1468.5px;top:923.72px;font-size:19px;color:#3a3a3a;font-weight:bold">0</span>
<span class="t" style="left:1229.7px;top:949.32px;font-size:19px;color:#555;font-style:italic;letter-spacing:-0.022px">Status:</span>
<span class="t" style="left:1366.7px;top:949.32px;font-size:19px;color:#3a3a3a;font-weight:bold;letter-spacing:-0.020px">versendet</span>
<div class="a" style="left:1230px;top:1016px;width:1061px;height:206px;border:1px solid #d6d6d6;border-radius:3px"></div>
<div class="a" style="left:1261px;top:1000px;width:295px;height:31px;border:1px solid #cfcfcf;border-radius:15px;background:linear-gradient(#fafafa,#ececec)"></div>
<span class="t" style="left:1279.0px;top:1005.92px;font-size:19px;color:#555;letter-spacing:0.089px">Verknüpfungen zur Kampagne</span>
<div class="a" style="left:1238px;top:1034px;width:1016px;height:36px;background:linear-gradient(#f7f7f7,#e5e5e5);"></div>
<div class="a" style="left:1238px;top:1069px;width:1016px;height:1px;background:#c8c8c8;"></div>
<span class="t" style="left:1246.5px;top:1038.92px;font-size:19px;color:#111;letter-spacing:-0.020px">Ereignis</span>
<span class="t" style="left:1487.5px;top:1038.92px;font-size:19px;color:#111;letter-spacing:0.049px">Position</span>
<span class="t" style="left:1697.0px;top:1038.92px;font-size:19px;color:#111;letter-spacing:0.016px">E-Status</span>
<span class="t" style="left:1873.0px;top:1038.92px;font-size:19px;color:#111;letter-spacing:0.079px">Synchronisiert</span>
<span class="t" style="left:2079.0px;top:1038.92px;font-size:19px;color:#111;letter-spacing:0.021px">Status</span>
<div class="a" style="left:1238px;top:1070px;width:1016px;height:28px;background:#e3e5eb;"></div>
<span class="t" style="left:1243.0px;top:1074.92px;font-size:19px;color:#444;letter-spacing:0.165px">Newsletters.Kampagne....</span>
<span class="t" style="left:1485.0px;top:1074.92px;font-size:19px;color:#444;letter-spacing:-0.570px">01</span>
<span class="t" style="left:1694.5px;top:1074.92px;font-size:19px;color:#444;letter-spacing:0.098px">initial</span>
<div class="a" style="left:1480px;top:1034px;width:1px;height:186px;background:#e6e6e6;"></div>
<div class="a" style="left:1688px;top:1034px;width:1px;height:186px;background:#e6e6e6;"></div>
<div class="a" style="left:1865px;top:1034px;width:1px;height:186px;background:#e6e6e6;"></div>
<div class="a" style="left:2071px;top:1034px;width:1px;height:186px;background:#e6e6e6;"></div>
<div class="a" style="left:2247px;top:1034px;width:1px;height:186px;background:#e6e6e6;"></div>
<svg class="a" style="left:2260.5px;top:1038.5px;" width="16" height="16" viewBox="0 0 16 16"><path d="M2 2H14" stroke="#333" stroke-width="2.2"/><path d="M2.5 13L8 7.5L13.5 13" stroke="#333" stroke-width="2.4" fill="none"/></svg>
<svg class="a" style="left:2260.5px;top:1063.5px;" width="16" height="16" viewBox="0 0 16 16"><path d="M2.5 8L8 2.5L13.5 8M2.5 14L8 8.5L13.5 14" stroke="#333" stroke-width="2.4" fill="none"/></svg>
<svg class="a" style="left:2260.5px;top:1172px;" width="16" height="16" viewBox="0 0 16 16"><path d="M2.5 2L8 7.5L13.5 2M2.5 8L8 13.5L13.5 8" stroke="#333" stroke-width="2.4" fill="none"/></svg>
<svg class="a" style="left:2260.5px;top:1197.5px;" width="16" height="16" viewBox="0 0 16 16"><path d="M2.5 3L8 8.5L13.5 3" stroke="#333" stroke-width="2.4" fill="none"/><path d="M2 14H14" stroke="#333" stroke-width="2.2"/></svg>
<div class="a" style="left:345px;top:795px;width:4px;height:3px;background:#c8c8c8;"></div>
<div class="a" style="left:345px;top:801px;width:4px;height:3px;background:#c8c8c8;"></div>
<div class="a" style="left:345px;top:807px;width:4px;height:3px;background:#c8c8c8;"></div>
<div class="a" style="left:655px;top:718px;width:561px;height:682px;background:linear-gradient(#f4f5f7,#f8f8fa 60%,#fcfcfc);border:1px solid #bdbdbd;box-shadow:2px 3px 8px rgba(0,0,0,0.18)"></div>
<span class="t" style="left:693.0px;top:728.67px;font-size:20px;color:#383838;transform:scaleX(1.0789);transform-origin:0 0;-webkit-text-stroke:0.15px currentColor">In Zwischenablage kopieren</span>
<span class="t" style="left:693.0px;top:765.57px;font-size:20px;color:#383838;transform:scaleX(1.0767);transform-origin:0 0;-webkit-text-stroke:0.15px currentColor">Zeilen in Zwischenablage kopieren</span>
<div class="a" style="left:665px;top:797.5px;width:541px;height:2px;background:#cbcccf;"></div>
<span class="t" style="left:693.0px;top:812.57px;font-size:20px;color:#383838;transform:scaleX(1.0908);transform-origin:0 0;-webkit-text-stroke:0.15px currentColor">Ereignis verknüpfen...</span>
<div class="a" style="left:656px;top:841px;width:559px;height:36px;background:linear-gradient(#6a80b6,#51679c);"></div>
<span class="t" style="left:693.0px;top:848.57px;font-size:20px;color:#f2f5fc;transform:scaleX(1.0896);transform-origin:0 0">Daten synchronisieren...</span>
<div class="a" style="left:665px;top:882.5px;width:541px;height:2px;background:#cbcccf;"></div>
<span class="t" style="left:693.0px;top:897.07px;font-size:20px;color:#383838;transform:scaleX(1.0205);transform-origin:0 0;-webkit-text-stroke:0.15px currentColor">Gehezu</span>
<svg class="a" style="left:1193px;top:901px;" width="8" height="12" viewBox="0 0 8 12"><path d="M1 0L7 6L1 12Z" fill="#222"/></svg>
<span class="t" style="left:693.0px;top:934.57px;font-size:20px;color:#383838;transform:scaleX(1.0527);transform-origin:0 0;-webkit-text-stroke:0.15px currentColor">Umgebung</span>
<span class="t" style="left:1119.0px;top:934.57px;font-size:20px;color:#383838;transform:scaleX(1.0937);transform-origin:0 0;-webkit-text-stroke:0.15px currentColor">Ctrl+U</span>
<div class="a" style="left:665px;top:967px;width:541px;height:2px;background:#cbcccf;"></div>
<span class="t" style="left:693.0px;top:984.07px;font-size:20px;color:#c6c6c6;transform:scaleX(1.0507);transform-origin:0 0;-webkit-text-stroke:0.15px currentColor">Neu erfassen</span>
<span class="t" style="left:1118.0px;top:984.07px;font-size:20px;color:#c6c6c6;transform:scaleX(1.1112);transform-origin:0 0;-webkit-text-stroke:0.15px currentColor">Ctrl+N</span>
<span class="t" style="left:693.0px;top:1022.07px;font-size:20px;color:#c6c6c6;transform:scaleX(1.0571);transform-origin:0 0;-webkit-text-stroke:0.15px currentColor">Neu als Kopie erfassen</span>
<span class="t" style="left:1058.0px;top:1022.07px;font-size:20px;color:#c6c6c6;transform:scaleX(1.1346);transform-origin:0 0;-webkit-text-stroke:0.15px currentColor">Ctrl+Shift+N</span>
<span class="t" style="left:693.0px;top:1061.07px;font-size:20px;color:#c6c6c6;transform:scaleX(1.0543);transform-origin:0 0;-webkit-text-stroke:0.15px currentColor">Ändern</span>
<span class="t" style="left:1120.5px;top:1061.07px;font-size:20px;color:#c6c6c6;transform:scaleX(1.0958);transform-origin:0 0;-webkit-text-stroke:0.15px currentColor">Ctrl+E</span>
<span class="t" style="left:693.0px;top:1099.57px;font-size:20px;color:#c6c6c6;transform:scaleX(1.0142);transform-origin:0 0;-webkit-text-stroke:0.15px currentColor">Löschen</span>
<span class="t" style="left:1118.0px;top:1099.57px;font-size:20px;color:#c6c6c6;transform:scaleX(1.1007);transform-origin:0 0;-webkit-text-stroke:0.15px currentColor">Ctrl+D</span>
<div class="a" style="left:665px;top:1132.5px;width:541px;height:2px;background:#cbcccf;"></div>
<span class="t" style="left:693.0px;top:1149.07px;font-size:20px;color:#c6c6c6;transform:scaleX(1.0826);transform-origin:0 0;-webkit-text-stroke:0.15px currentColor">Suchen...</span>
<span class="t" style="left:1121.0px;top:1149.07px;font-size:20px;color:#c6c6c6;transform:scaleX(1.1455);transform-origin:0 0;-webkit-text-stroke:0.15px currentColor">Ctrl+F</span>
<span class="t" style="left:693.0px;top:1187.57px;font-size:20px;color:#c6c6c6;transform:scaleX(1.0567);transform-origin:0 0;-webkit-text-stroke:0.15px currentColor">Letzte Suchergebnisse</span>
<span class="t" style="left:1060.6px;top:1187.57px;font-size:20px;color:#c6c6c6;transform:scaleX(1.1565);transform-origin:0 0;-webkit-text-stroke:0.15px currentColor">Ctrl+Shift+F</span>
<div class="a" style="left:665px;top:1220.5px;width:541px;height:2px;background:#cbcccf;"></div>
<span class="t" style="left:693.0px;top:1237.07px;font-size:20px;color:#383838;transform:scaleX(1.0979);transform-origin:0 0;-webkit-text-stroke:0.15px currentColor">Exportieren...</span>
<span class="t" style="left:1121.0px;top:1237.07px;font-size:20px;color:#383838;transform:scaleX(1.0869);transform-origin:0 0;-webkit-text-stroke:0.15px currentColor">Ctrl+P</span>
<div class="a" style="left:665px;top:1270px;width:541px;height:2px;background:#cbcccf;"></div>
<span class="t" style="left:693.0px;top:1286.57px;font-size:20px;color:#383838;transform:scaleX(1.0901);transform-origin:0 0;-webkit-text-stroke:0.15px currentColor">Sortierung</span>
<svg class="a" style="left:1193px;top:1290.5px;" width="8" height="12" viewBox="0 0 8 12"><path d="M1 0L7 6L1 12Z" fill="#222"/></svg>
<span class="t" style="left:693.0px;top:1320.57px;font-size:20px;color:#383838;transform:scaleX(1.0798);transform-origin:0 0;-webkit-text-stroke:0.15px currentColor">Filter</span>
<svg class="a" style="left:1193px;top:1324.5px;" width="8" height="12" viewBox="0 0 8 12"><path d="M1 0L7 6L1 12Z" fill="#222"/></svg>
<div class="a" style="left:665px;top:1355px;width:541px;height:2px;background:#cbcccf;"></div>
<span class="t" style="left:693.0px;top:1371.07px;font-size:20px;color:#383838;transform:scaleX(1.0828);transform-origin:0 0;-webkit-text-stroke:0.15px currentColor">Aktualisieren</span>
<span class="t" style="left:1159.5px;top:1371.07px;font-size:20px;color:#383838;transform:scaleX(0.9639);transform-origin:0 0;-webkit-text-stroke:0.15px currentColor">F5</span>
<div class="a" style="left:666px;top:983px;width:21px;height:21px;border-radius:50%;background:#b9cfba"></div>
<svg class="a" style="left:670px;top:987px;" width="13" height="13" viewBox="0 0 13 13"><path d="M6.5 2V11M2 6.5H11" stroke="#e8f0e8" stroke-width="2"/></svg>
<div class="a" style="left:666px;top:1021px;width:19px;height:19px;border-radius:50%;background:#bfcdbf"></div>
<svg class="a" style="left:666px;top:1060px;" width="20" height="20" viewBox="0 0 20 20"><path d="M3 17L17 3" stroke="#efe6c4" stroke-width="3"/></svg>
<div class="a" style="left:669px;top:1099px;width:15px;height:19px;border-radius:3px;background:#f1c9cd"></div>
<svg class="a" style="left:666px;top:1148px;" width="22" height="22" viewBox="0 0 22 22"><circle cx="9" cy="9" r="6" stroke="#d5d8dc" stroke-width="2.2" fill="none"/><path d="M13.5 13.5L19 19" stroke="#d5d8dc" stroke-width="2.6"/></svg>
<svg class="a" style="left:668px;top:1186px;" width="22" height="22" viewBox="0 0 22 22"><circle cx="11" cy="8" r="5" stroke="#d8dade" stroke-width="2.2" fill="none"/><path d="M14 12L18 16" stroke="#d8dade" stroke-width="2.4"/><path d="M2 20L8 15" stroke="#cfe0ee" stroke-width="2"/></svg>
<svg class="a" style="left:665px;top:1235px;" width="22" height="22" viewBox="0 0 22 22"><rect x="5" y="1.5" width="12" height="6" stroke="#333" stroke-width="2.2" fill="none"/><rect x="1" y="7.5" width="20" height="8" rx="2" fill="#333"/><rect x="5" y="13" width="12" height="7" stroke="#333" stroke-width="2.2" fill="#f6f7f9"/></svg>
<svg class="a" style="left:666px;top:1369px;" width="22" height="22" viewBox="0 0 22 22"><path d="M16 5 A8 8 0 1 0 18.5 13" stroke="#e9c24a" stroke-width="3" fill="none"/><path d="M19.5 2V8.5H13Z" fill="#ef9b3a"/></svg>
<svg class="a" style="left:779px;top:852px;" width="16" height="24" viewBox="0 0 16 24"><path d="M1 1V19L5.5 14.5L9 22L12 20.5L8.5 13.5H14.5Z" fill="#111" stroke="#fff" stroke-width="1.4" stroke-linejoin="round"/></svg>
<span class="t" style="left:8.5px;top:1366.57px;font-size:20px;color:#555;transform:scaleX(1.1219);transform-origin:0 0">Erfasst: 16.04.24 / dac Geändert: 17.04.24 / dac</span>
<span class="t" style="left:2134.0px;top:1370.62px;font-size:19px;color:#444;letter-spacing:0.100px">Standard / dac</span>
<svg class="a" style="left:2274px;top:1369px;" width="24" height="24" viewBox="0 0 24 24"><circle cx="12" cy="11" r="9.8" stroke="#3a3a3a" stroke-width="2.6" fill="none"/><path d="M12 9.5V16" stroke="#3a3a3a" stroke-width="2.8"/><circle cx="12" cy="6.3" r="1.6" fill="#3a3a3a"/></svg>
<svg class="a" style="left:0;top:1387px" width="14" height="14"><path d="M0 0 A14 14 0 0 0 14 14 L0 14Z" fill="#2f4f86"/></svg>
<svg class="a" style="left:2290px;top:1387px" width="14" height="14"><path d="M14 0 A14 14 0 0 1 0 14 L14 14Z" fill="#b8622b"/></svg>
</body></html>
